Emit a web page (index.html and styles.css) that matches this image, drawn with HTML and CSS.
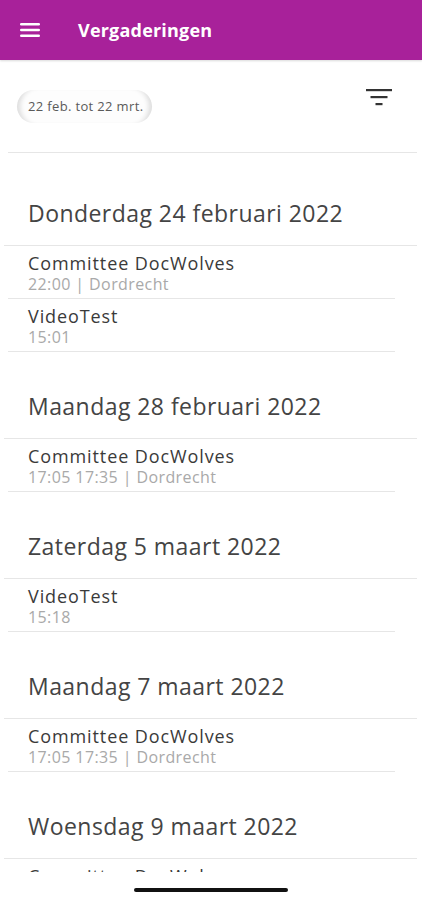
FILE: index.html
```html
<!DOCTYPE html>
<html lang="nl">
<head>
    <meta charset="UTF-8">
    <meta name="viewport" content="width=device-width, initial-scale=1.0">
    <title>Vergaderingen</title>
    <link rel="stylesheet" href="styles.css">
</head>
<body>
    <div class="app">
        <header class="app-bar">
            <button class="menu-btn" aria-label="Menu">
                <svg width="20" height="16" viewBox="0 0 20 16">
                    <rect x="0" y="1" width="20" height="2.6" rx="1.3" fill="#fff"/>
                    <rect x="0" y="6.7" width="20" height="2.6" rx="1.3" fill="#fff"/>
                    <rect x="0" y="12.4" width="20" height="2.6" rx="1.3" fill="#fff"/>
                </svg>
            </button>
            <h1>Vergaderingen</h1>
        </header>

        <div class="toolbar">
            <span class="range-chip">22 feb. tot 22 mrt.</span>
            <button class="filter-btn" aria-label="Filter">
                <svg width="26" height="18" viewBox="0 0 26 18">
                    <rect x="0" y="0" width="26" height="2.2" fill="#333"/>
                    <rect x="4.5" y="7" width="17" height="2.2" fill="#333"/>
                    <rect x="9.5" y="14" width="7" height="2.2" fill="#333"/>
                </svg>
            </button>
        </div>

        <main class="meetings">
            <section class="day">
                <h2>Donderdag 24 februari 2022</h2>
                <ul class="day-list">
                    <li class="meeting">
                        <div class="meeting-title">Committee DocWolves</div>
                        <div class="meeting-meta">22:00 | Dordrecht</div>
                    </li>
                    <li class="meeting">
                        <div class="meeting-title">VideoTest</div>
                        <div class="meeting-meta">15:01</div>
                    </li>
                </ul>
            </section>

            <section class="day">
                <h2>Maandag 28 februari 2022</h2>
                <ul class="day-list">
                    <li class="meeting">
                        <div class="meeting-title">Committee DocWolves</div>
                        <div class="meeting-meta">17:05 17:35 | Dordrecht</div>
                    </li>
                </ul>
            </section>

            <section class="day">
                <h2>Zaterdag 5 maart 2022</h2>
                <ul class="day-list">
                    <li class="meeting">
                        <div class="meeting-title">VideoTest</div>
                        <div class="meeting-meta">15:18</div>
                    </li>
                </ul>
            </section>

            <section class="day">
                <h2>Maandag 7 maart 2022</h2>
                <ul class="day-list">
                    <li class="meeting">
                        <div class="meeting-title">Committee DocWolves</div>
                        <div class="meeting-meta">17:05 17:35 | Dordrecht</div>
                    </li>
                </ul>
            </section>

            <section class="day">
                <h2>Woensdag 9 maart 2022</h2>
                <ul class="day-list">
                    <li class="meeting">
                        <div class="meeting-title">Committee DocWolves</div>
                        <div class="meeting-meta">17:05 17:35 | Dordrecht</div>
                    </li>
                </ul>
            </section>
        </main>

        <div class="home-bar"><span class="home-indicator"></span></div>
    </div>
</body>
</html>
```

FILE: styles.css
```css
* {
    box-sizing: border-box;
}

body {
    margin: 0;
    padding: 0;
    font-family: "Open Sans", "Noto Sans", Arial, sans-serif;
    background-color: #fff;
    color: #333;
}

.app {
    height: 900px;
    display: flex;
    flex-direction: column;
    overflow: hidden;
}

.app-bar {
    height: 60px;
    flex-shrink: 0;
    display: flex;
    align-items: center;
    background-color: #a8219a;
    box-shadow: 0 1px 2px rgba(0, 0, 0, 0.15);
    position: relative;
    z-index: 1;
}

.menu-btn {
    background: none;
    border: none;
    padding: 0;
    margin-left: 20px;
    width: 20px;
    height: 16px;
    display: flex;
}

.app-bar h1 {
    margin: 0 0 0 38px;
    font-size: 18px;
    font-weight: 700;
    letter-spacing: 0.2px;
    color: #fff;
    line-height: 24px;
}

.toolbar {
    height: 93px;
    flex-shrink: 0;
    margin: 0 5px 0 8px;
    display: flex;
    align-items: flex-start;
    justify-content: space-between;
    border-bottom: 1px solid #e6e6e6;
}

.range-chip {
    margin: 30px 0 0 9px;
    padding: 0 9px 0 11px;
    height: 33px;
    line-height: 33px;
    border-radius: 17px;
    font-size: 13px;
    letter-spacing: 0.35px;
    color: #5a5a5a;
    background-color: #fdfdfd;
    box-shadow: inset 7px 0 5px -4px #dcdcdc, inset -7px 0 5px -4px #dcdcdc;
}

.filter-btn {
    background: none;
    border: none;
    padding: 0;
    margin: 29px 25px 0 0;
    width: 26px;
    height: 18px;
    display: flex;
}

.meetings {
    flex: 1;
    overflow: hidden;
    padding-top: 6px;
}

.day h2 {
    margin: 0 28px;
    padding: 39px 0 17px;
    font-size: 23px;
    font-weight: 400;
    letter-spacing: 0.45px;
    line-height: 30px;
    color: #444;
}

.day-list {
    list-style: none;
    margin: 0 5px 0 4px;
    padding: 0;
    border-top: 1px solid #e6e6e6;
}

.meeting {
    margin: 0 22px 0 4px;
    padding: 6px 0 4px 20px;
    border-bottom: 1px solid #e6e6e6;
}

.meeting-title {
    font-size: 18px;
    letter-spacing: 0.9px;
    line-height: 22px;
    color: #3a3a3a;
}

.meeting-meta {
    font-size: 16px;
    letter-spacing: 0.4px;
    line-height: 20px;
    color: #a9a9a9;
}

.home-bar {
    height: 28px;
    flex-shrink: 0;
    display: flex;
    justify-content: center;
    padding-top: 16px;
    background-color: #fff;
}

.home-indicator {
    width: 154px;
    height: 4px;
    border-radius: 2px;
    background-color: #111;
}
```
